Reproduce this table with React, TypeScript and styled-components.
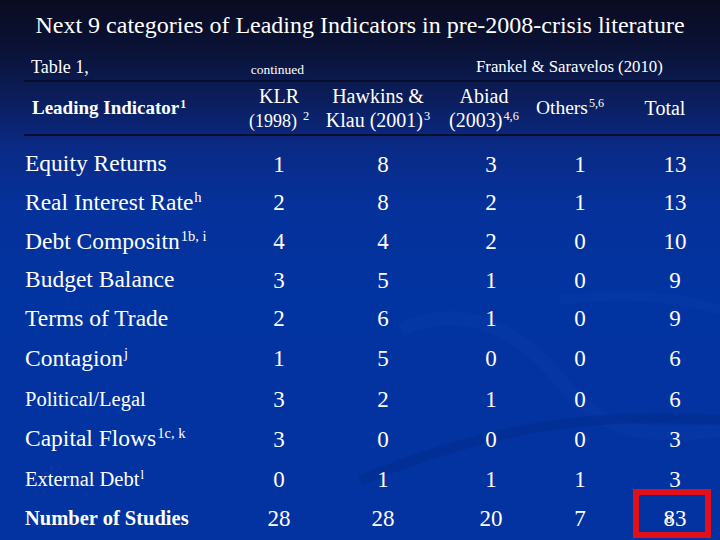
import React from "react";
import styled, { createGlobalStyle } from "styled-components";

const Global = createGlobalStyle`
  html, body { margin: 0; padding: 0; background: #0a0d24; }
  body { font-family: "Liberation Serif", "Times New Roman", serif; }
`;

const Slide = styled.div`
  position: relative;
  width: 720px;
  height: 540px;
  overflow: hidden;
  color: #ffffff;
  font-family: "Liberation Serif", "Times New Roman", serif;
  background: linear-gradient(
    180deg,
    #090b20 0%,
    #0a1236 9%,
    #0b1d5a 18%,
    #0a2a85 27%,
    #05319a 38%,
    #0234a1 55%,
    #0233a0 100%
  );
`;

const Swoosh = styled.svg`
  position: absolute;
  left: 0;
  top: 0;
  width: 720px;
  height: 540px;
  pointer-events: none;
`;

const Content = styled.div`
  position: relative;
  display: flex;
  flex-direction: column;
`;

const Title = styled.h1`
  margin: 10px 0 0;
  height: 30px;
  line-height: 30px;
  font-size: 24px;
  font-weight: normal;
  text-align: center;
  white-space: nowrap;
`;

const Caption = styled.div`
  display: flex;
  align-items: flex-end;
  height: 40px;
  margin-left: 24px;
  box-sizing: border-box;
  padding-bottom: 4px;
  line-height: 1;
  white-space: nowrap;
`;

const CapText = styled.span<{ $x: number; $size: number }>`
  margin-left: ${(p) => p.$x}px;
  font-size: ${(p) => p.$size}px;
`;

const Table = styled.div`
  margin-left: 24px;
  display: flex;
  flex-direction: column;
`;

const cols = `215px 78px 130px 86px 92px 98px`;

const HeadRow = styled.div`
  display: grid;
  grid-template-columns: ${cols};
  align-items: center;
  height: 56px;
  box-sizing: border-box;
  border-top: 2px solid #070d2e;
  border-bottom: 2px solid #070d2e;
  margin-bottom: 9px;
  padding-left: 1px;
`;

const HeadLabel = styled.div`
  padding-left: 7px;
  font-size: 19px;
  font-weight: bold;
  white-space: nowrap;
`;

const HeadCell = styled.div<{ $shift?: number; $size?: number }>`
  text-align: center;
  padding-right: ${(p) => p.$shift ?? 0}px;
  font-size: ${(p) => p.$size ?? 20}px;
  line-height: 24px;
  white-space: nowrap;
`;

const Small = styled.span`
  font-size: 18px;
`;

const Row = styled.div<{ $h: number }>`
  display: grid;
  grid-template-columns: ${cols};
  align-items: center;
  height: ${(p) => p.$h}px;
  padding-left: 1px;
`;

const Label = styled.div<{ $size: number; $bold?: boolean }>`
  font-size: ${(p) => p.$size}px;
  font-weight: ${(p) => (p.$bold ? "bold" : "normal")};
  white-space: nowrap;
  line-height: 1;
`;

const Num = styled.div`
  text-align: center;
  font-size: 23px;
  line-height: 1;
`;

const Sup = styled.sup`
  font-size: 62%;
  line-height: 0;
  vertical-align: 0;
  position: relative;
  top: -0.55em;
  margin-left: 1px;
`;

const Highlight = styled.div`
  position: absolute;
  left: 633px;
  top: 489px;
  width: 78px;
  height: 49px;
  box-sizing: border-box;
  border: 6px solid #e3101c;
`;

const PageNo = styled.span`
  position: absolute;
  left: 666px;
  top: 513px;
  font-size: 12px;
  line-height: 1;
  color: #ffffff;
`;

type RowData = {
  label: React.ReactNode;
  size: number;
  bold?: boolean;
  h: number;
  v: string[];
};

const rows: RowData[] = [
  { label: "Equity Returns", size: 23.5, h: 38, v: ["1", "8", "3", "1", "13"] },
  { label: <>Real Interest Rate<Sup>h</Sup></>, size: 23.5, h: 39, v: ["2", "8", "2", "1", "13"] },
  { label: <>Debt Compositn<Sup>1b, i</Sup></>, size: 23.5, h: 39, v: ["4", "4", "2", "0", "10"] },
  { label: "Budget Balance", size: 23.5, h: 38, v: ["3", "5", "1", "0", "9"] },
  { label: "Terms of Trade", size: 23.5, h: 39, v: ["2", "6", "1", "0", "9"] },
  { label: <>Contagion<Sup>j</Sup></>, size: 23.5, h: 41, v: ["1", "5", "0", "0", "6"] },
  { label: "Political/Legal", size: 20.5, h: 40, v: ["3", "2", "1", "0", "6"] },
  { label: <>Capital Flows<Sup>1c, k</Sup></>, size: 23.5, h: 40, v: ["3", "0", "0", "0", "3"] },
  { label: <>External Debt<Sup>l</Sup></>, size: 20.5, h: 40, v: ["0", "1", "1", "1", "3"] },
  { label: "Number of Studies", size: 20.5, bold: true, h: 38, v: ["28", "28", "20", "7", "83"] },
];

export default function App() {
  return (
    <>
      <Global />
      <Slide>
        <Swoosh viewBox="0 0 720 540">
          <path
            d="M 400 330 C 460 300, 520 330, 560 380 C 600 430, 640 440, 720 430"
            fill="none"
            stroke="#0a3cab"
            strokeWidth="14"
            opacity="0.4"
          />
          <path
            d="M 360 480 C 460 440, 560 410, 720 420"
            fill="none"
            stroke="#022a8a"
            strokeWidth="10"
            opacity="0.45"
          />
          <path
            d="M 560 300 C 640 290, 690 300, 720 310"
            fill="none"
            stroke="#0a3cab"
            strokeWidth="10"
            opacity="0.3"
          />
        </Swoosh>
        <Content>
          <Title>Next 9 categories of Leading Indicators in pre-2008-crisis literature</Title>
          <Caption>
            <CapText $x={7} $size={18}>Table 1,</CapText>
            <CapText $x={162} $size={13.5}>continued</CapText>
            <CapText $x={172} $size={16.8}>Frankel &amp; Saravelos (2010)</CapText>
          </Caption>
          <Table>
            <HeadRow>
              <HeadLabel>
                Leading Indicator<Sup>1</Sup>
              </HeadLabel>
              <HeadCell>
                KLR
                <br />
                <Small>(1998)</Small> <Sup>2</Sup>
              </HeadCell>
              <HeadCell $shift={10}>
                Hawkins &amp;
                <br />
                Klau (2001)<Sup>3</Sup>
              </HeadCell>
              <HeadCell $shift={14}>
                Abiad
                <br />
                (2003)<Sup>4,6</Sup>
              </HeadCell>
              <HeadCell $shift={20} $size={19.5}>
                Others<Sup>5,6</Sup>
              </HeadCell>
              <HeadCell $shift={20}>Total</HeadCell>
            </HeadRow>
            {rows.map((r, i) => (
              <Row key={i} $h={r.h}>
                <Label $size={r.size} $bold={r.bold}>
                  {r.label}
                </Label>
                {r.v.map((n, j) => (
                  <Num key={j}>{n}</Num>
                ))}
              </Row>
            ))}
          </Table>
        </Content>
        <Highlight />
        <PageNo>8</PageNo>
      </Slide>
    </>
  );
}
